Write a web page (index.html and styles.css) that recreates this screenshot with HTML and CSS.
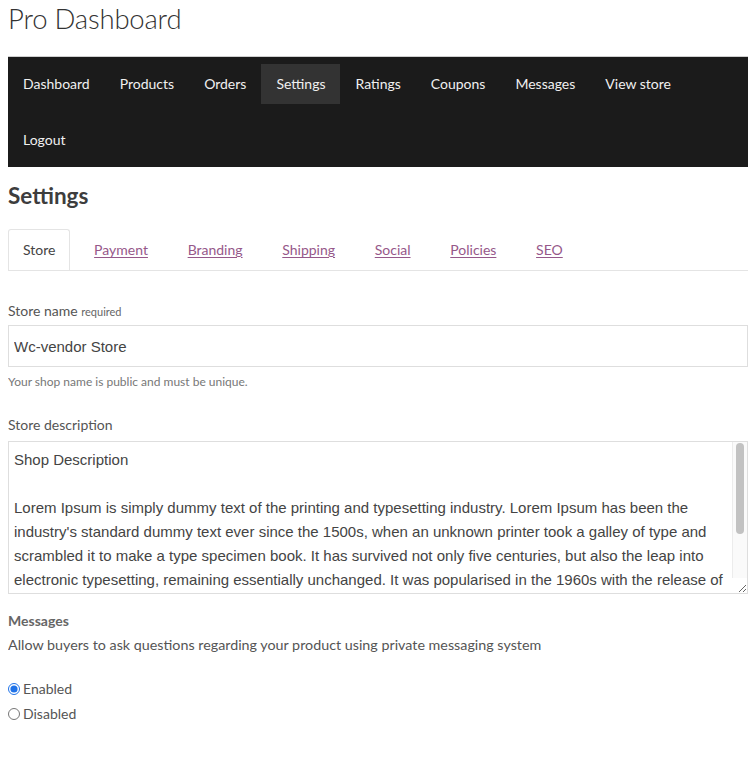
FILE: index.html
```html
<!DOCTYPE html>
<html lang="en">
<head>
<meta charset="utf-8">
<title>Pro Dashboard</title>
<link rel="stylesheet" href="styles.css">
</head>
<body>
<h1 class="page-title">Pro Dashboard</h1>
<nav class="dash-nav">
  <ul class="dash-menu">
    <li><a href="#">Dashboard</a></li>
    <li><a href="#">Products</a></li>
    <li><a href="#">Orders</a></li>
    <li class="active"><a href="#">Settings</a></li>
    <li><a href="#">Ratings</a></li>
    <li><a href="#">Coupons</a></li>
    <li><a href="#">Messages</a></li>
    <li><a href="#">View store</a></li>
    <li><a href="#">Logout</a></li>
  </ul>
</nav>
<h2 class="section-title">Settings</h2>
<ul class="tabs">
  <li class="tab current"><span>Store</span></li>
  <li class="tab"><a href="#">Payment</a></li>
  <li class="tab"><a href="#">Branding</a></li>
  <li class="tab"><a href="#">Shipping</a></li>
  <li class="tab"><a href="#">Social</a></li>
  <li class="tab"><a href="#">Policies</a></li>
  <li class="tab"><a href="#">SEO</a></li>
</ul>
<form class="settings-form">
  <div class="field">
    <label class="field-label" for="store-name">Store name <small>required</small></label>
    <input class="text-input" id="store-name" type="text" value="Wc-vendor Store">
    <p class="help">Your shop name is public and must be unique.</p>
  </div>
  <div class="field">
    <label class="field-label desc-label" for="store-desc">Store description</label>
    <div class="area-wrap">
      <textarea class="text-area" id="store-desc">Shop Description

Lorem Ipsum is simply dummy text of the printing and typesetting industry. Lorem Ipsum has been the industry's standard dummy text ever since the 1500s, when an unknown printer took a galley of type and scrambled it to make a type specimen book. It has survived not only five centuries, but also the leap into electronic typesetting, remaining essentially unchanged. It was popularised in the 1960s with the release of Letraset sheets containing Lorem Ipsum passages, and more recently with desktop publishing software like Aldus PageMaker including versions of Lorem Ipsum.</textarea>
      <div class="fake-scroll" aria-hidden="true"><div class="fake-thumb"></div></div>
    </div>
  </div>
  <div class="field messages">
    <div class="field-title">Messages</div>
    <p class="desc">Allow buyers to ask questions regarding your product using private messaging system</p>
    <label class="radio first"><input type="radio" name="msg" checked> Enabled</label>
    <label class="radio"><input type="radio" name="msg"> Disabled</label>
  </div>
</form>
</body>
</html>
```
FILE: styles.css
```css
body {
  margin: 8px;
  font-family: "Lato", "Liberation Sans", sans-serif;
  color: #555;
  background: #fff;
}
.page-title {
  margin: 0;
  font-size: 27.5px;
  font-weight: 300;
  color: #333;
  line-height: 34px;
  margin-top: -6px;
  letter-spacing: -0.2px;
}
.dash-nav {
  margin-top: 20px;
  background: #1b1b1b;
  border-top: 1px solid #cfcfcf;
  padding: 7px 0;
}
.dash-menu {
  list-style: none;
  margin: 0;
  padding: 0;
  display: flex;
  flex-wrap: wrap;
  row-gap: 16px;
}
.dash-menu li a {
  display: block;
  padding: 0 15px;
  height: 40px;
  line-height: 40px;
  color: #f0f0f0;
  font-size: 14px;
  text-decoration: none;
}
.dash-menu li.active a {
  background: #333;
}
.section-title {
  margin: 17px 0 0;
  font-size: 22.5px;
  font-weight: 700;
  color: #3d3d3d;
  line-height: 24px;
}
.tabs {
  list-style: none;
  margin: 21px 0 0;
  padding: 0;
  display: flex;
  gap: 7.7px;
  border-bottom: 1px solid #e4e4e4;
}
.tab {
  height: 40px;
  line-height: 40px;
  padding: 0 15px;
  font-size: 14px;
  border: 1px solid transparent;
  border-bottom: 0;
}
.tab:first-child {
  padding: 0 14px;
}
.tab a {
  color: #96588a;
  text-decoration: underline;
  text-underline-offset: 2px;
}
.tab.current {
  border-color: #e4e4e4;
  border-radius: 3px 3px 0 0;
  color: #444;
}
.settings-form {
  margin-top: 31px;
}
.field-label {
  display: block;
  font-size: 14px;
  color: #555;
  line-height: 18px;
  margin-bottom: 4px;
}
.field-label.desc-label {
  margin-bottom: 7px;
}
.field-label small {
  font-size: 11px;
  color: #666;
}
.text-input {
  display: block;
  box-sizing: border-box;
  width: 100%;
  height: 42px;
  margin: 0;
  padding: 0 5px;
  border: 1px solid #dedede;
  font-family: "Liberation Sans", Arial, sans-serif;
  font-size: 15px;
  color: #444;
  outline: none;
}
.help {
  margin: 7px 0 0;
  font-size: 12px;
  color: #777;
  line-height: 16px;
}
.field + .field {
  margin-top: 26px;
}
.area-wrap {
  position: relative;
}
.text-area {
  display: block;
  box-sizing: border-box;
  width: 100%;
  height: 153px;
  margin: 0;
  padding: 6px 5px;
  border: 1px solid #dedede;
  font-family: "Liberation Sans", Arial, sans-serif;
  font-size: 15px;
  line-height: 24px;
  color: #444;
  outline: none;
  resize: vertical;
  overflow: hidden;
}
.fake-scroll {
  position: absolute;
  top: 1px;
  right: 1px;
  width: 14px;
  bottom: 16px;
  background: #fafafa;
  border-left: 1px solid #ececec;
  pointer-events: none;
}
.fake-thumb {
  margin: 1px 0 0 3px;
  width: 8px;
  height: 91px;
  border-radius: 4px;
  background: #c2c2c2;
}
.field.messages {
  margin-top: 18px;
}
.field-title {
  font-size: 14px;
  font-weight: 700;
  color: #666;
  line-height: 18px;
}
.desc {
  margin: 6px 0 0;
  font-size: 14.3px;
  color: #555;
  line-height: 18px;
}
.radio {
  display: flex;
  align-items: center;
  font-size: 14px;
  color: #555;
  line-height: 18px;
  gap: 3px;
}
.radio.first {
  margin-top: 26px;
}
.radio + .radio {
  margin-top: 7px;
}
.radio input {
  margin: 0;
  width: 12px;
  height: 12px;
  accent-color: #1f72e8;
}
```
